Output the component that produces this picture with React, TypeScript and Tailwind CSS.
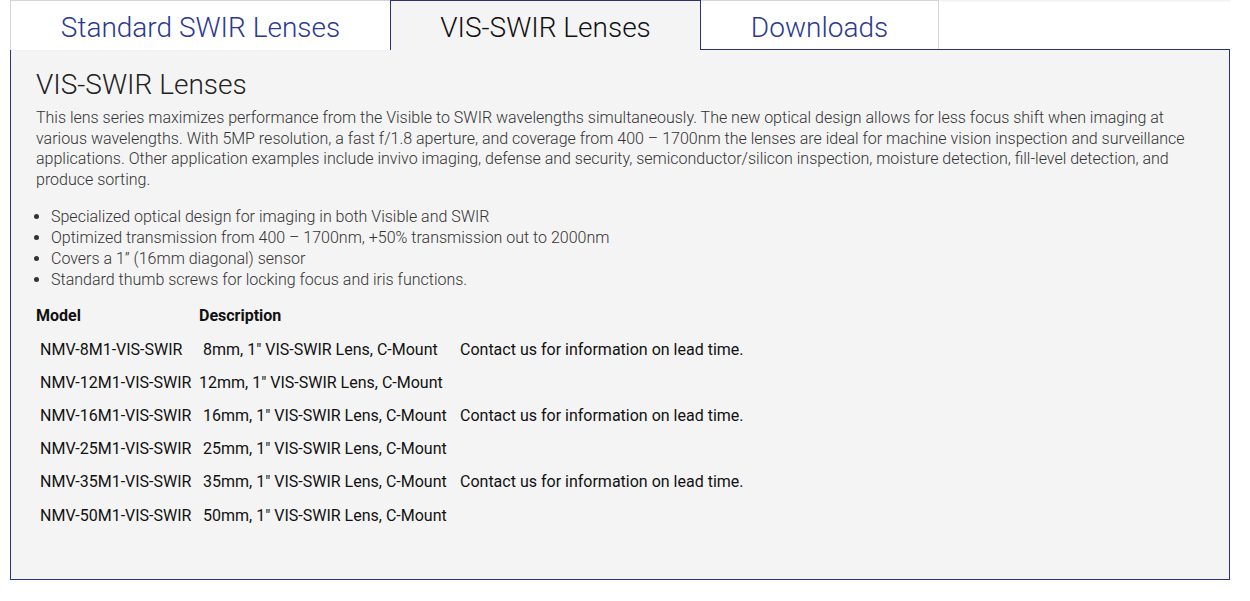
const rows = [
  { model: 'NMV-8M1-VIS-SWIR', desc: '8mm, 1" VIS-SWIR Lens, C-Mount', note: 'Contact us for information on lead time.', tight: false },
  { model: 'NMV-12M1-VIS-SWIR', desc: '12mm, 1" VIS-SWIR Lens, C-Mount', note: '', tight: true },
  { model: 'NMV-16M1-VIS-SWIR', desc: '16mm, 1" VIS-SWIR Lens, C-Mount', note: 'Contact us for information on lead time.', tight: false },
  { model: 'NMV-25M1-VIS-SWIR', desc: '25mm, 1" VIS-SWIR Lens, C-Mount', note: '', tight: false },
  { model: 'NMV-35M1-VIS-SWIR', desc: '35mm, 1" VIS-SWIR Lens, C-Mount', note: 'Contact us for information on lead time.', tight: false },
  { model: 'NMV-50M1-VIS-SWIR', desc: '50mm, 1" VIS-SWIR Lens, C-Mount', note: '', tight: false },
];

const bullets = [
  'Specialized optical design for imaging in both Visible and SWIR',
  'Optimized transmission from 400 – 1700nm, +50% transmission out to 2000nm',
  'Covers a 1” (16mm diagonal) sensor',
  'Standard thumb screws for locking focus and iris functions.',
];

export default function App() {
  return (
    <div className="min-h-[601px] bg-white pl-[10px] pr-[20px] font-['Roboto',sans-serif]">
      {/* Tabs */}
      <div className="relative z-10 flex h-[50px] shadow-[inset_0_2px_2px_-1px_rgba(0,0,0,0.08)]">
        <div className="flex w-[380px] items-center justify-center border-l border-t border-[#d6d6d6] bg-white pt-[5px] text-[28px] font-light text-[#2b3990] shadow-[3px_0_4px_-2px_rgba(0,0,0,0.12)]">
          Standard SWIR Lenses
        </div>
        <div className="flex w-[311px] items-center justify-center border-x border-t border-[#28327a] bg-[#f4f4f4] pt-[5px] text-[28px] font-light text-[#111]">
          VIS-SWIR Lenses
        </div>
        <div className="flex h-[49px] w-[238px] items-center justify-center border-r border-t border-[#d6d6d6] bg-white pt-[5px] text-[28px] font-light text-[#2b3990]">
          Downloads
        </div>
      </div>

      {/* Panel */}
      <div className="-mt-px h-[531px] border border-[#28327a] bg-[#f4f4f4] px-[25px] pt-[19px]">
        <h2 className="mb-[7px] text-[28px] font-light leading-[32px] text-[#222]">VIS-SWIR Lenses</h2>
        <p className="text-[16px] font-light leading-[20.7px] text-[#333]">
          This lens series maximizes performance from the Visible to SWIR wavelengths simultaneously. The new optical design allows for less focus shift when imaging at various wavelengths. With 5MP resolution, a fast f/1.8 aperture, and coverage from 400 – 1700nm the lenses are ideal for machine vision inspection and surveillance applications. Other application examples include invivo imaging, defense and security, semiconductor/silicon inspection, moisture detection, fill-level detection, and produce sorting.
        </p>
        <ul className="mt-[15px] list-disc pl-[15px] text-[16px] font-light leading-[21px] text-[#333]">
          {bullets.map((b) => (
            <li key={b}>{b}</li>
          ))}
        </ul>

        <div className="mt-[10px] text-[16px] text-[#111]">
          <div className="flex h-[33.2px] items-center font-bold">
            <div className="w-[163px]">Model</div>
            <div>Description</div>
          </div>
          {rows.map((r) => (
            <div key={r.model} className="flex h-[33.2px] items-center">
              <div className="w-[163px] pl-[4px]">{r.model}</div>
              <div className={r.tight ? 'w-[261px]' : 'w-[261px] pl-[4px]'}>{r.desc}</div>
              <div>{r.note}</div>
            </div>
          ))}
        </div>
      </div>
    </div>
  );
}
